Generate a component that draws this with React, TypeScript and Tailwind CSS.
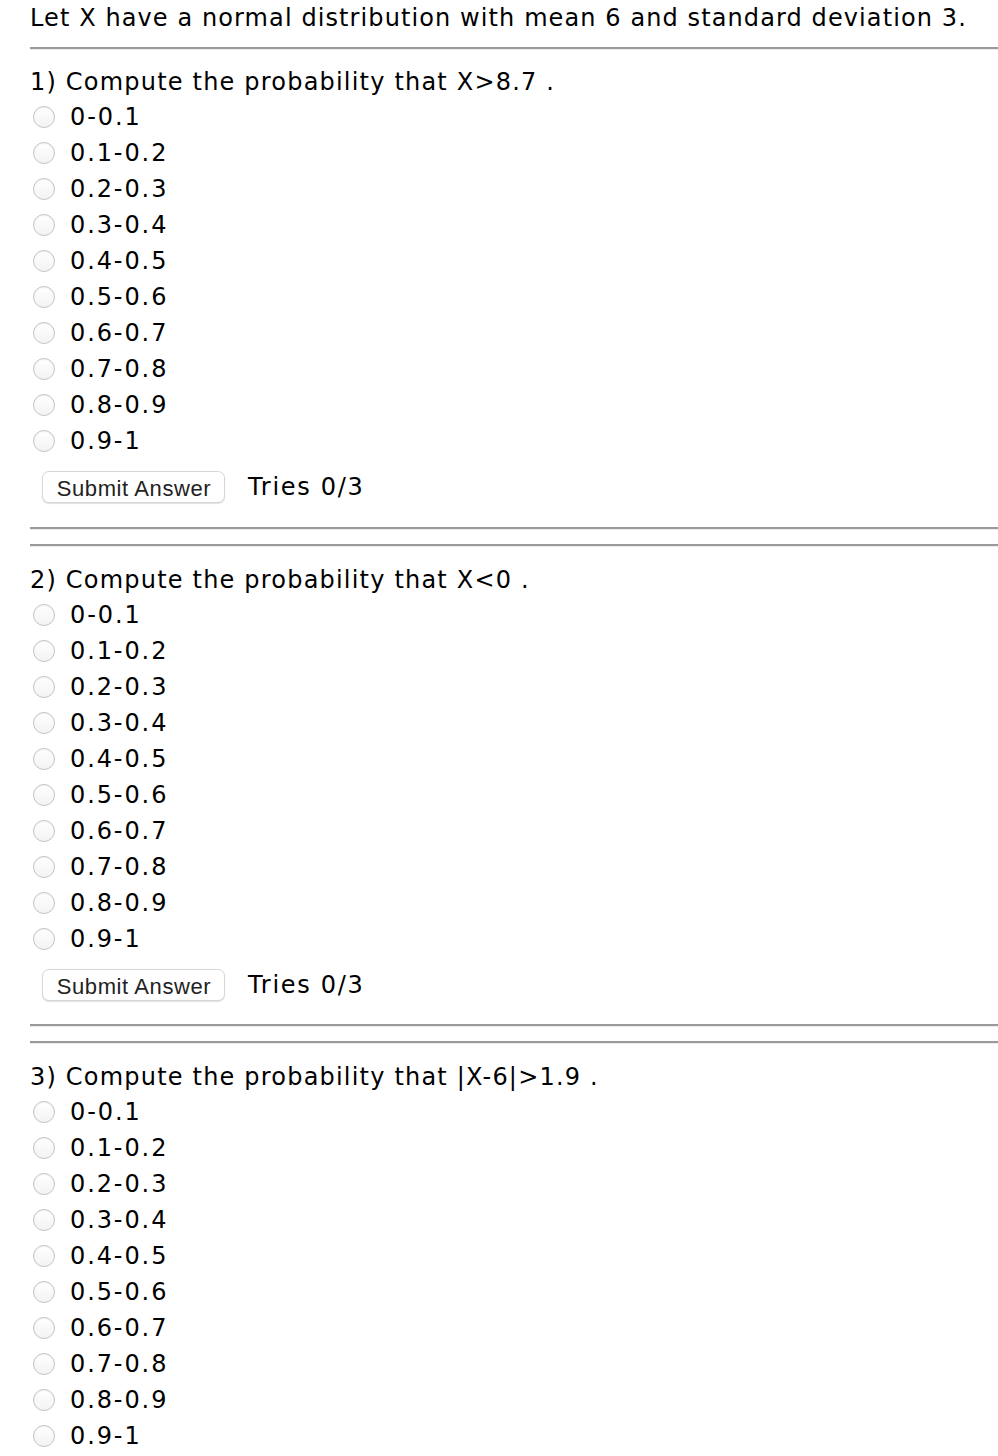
import React from "react";

const OPTIONS = [
  "0-0.1",
  "0.1-0.2",
  "0.2-0.3",
  "0.3-0.4",
  "0.4-0.5",
  "0.5-0.6",
  "0.6-0.7",
  "0.7-0.8",
  "0.8-0.9",
  "0.9-1",
];

function Rule({ className = "" }: { className?: string }) {
  return (
    <div
      className={`h-[3px] border-t-2 border-b border-t-[#9a9a9a] border-b-[#ececec] ${className}`}
    />
  );
}

function Radio() {
  return (
    <span className="ml-[3px] inline-block h-[22px] w-[22px] shrink-0 rounded-full border border-[#c4c4c4] bg-gradient-to-b from-white to-[#f3f3f3] shadow-[inset_0_1px_1px_rgba(0,0,0,0.05)]" />
  );
}

function Problem({ title, footer = true }: { title: string; footer?: boolean }) {
  return (
    <div>
      <div className="h-[33px] text-[24px] leading-[33px] tracking-[1.2px]">{title}</div>
      {OPTIONS.map((o) => (
        <label key={o} className="flex h-[36px] items-center">
          <Radio />
          <span className="ml-[15px] text-[24px] leading-[36px] tracking-[1.9px]">{o}</span>
        </label>
      ))}
      {footer && (
        <div className="mt-[11px] flex h-[33px] items-center">
          <button className="ml-[12px] h-[32px] w-[183px] rounded-[7px] border border-[#d6d6d6] bg-white pl-[1px] text-[22px] tracking-[0.6px] text-[#222] shadow-[0_1px_1px_rgba(0,0,0,0.12)] font-['Liberation_Sans',Arial,sans-serif]">
            Submit Answer
          </button>
          <span className="ml-[23px] text-[24px] tracking-[1.7px]">Tries 0/3</span>
        </div>
      )}
    </div>
  );
}

export default function App() {
  return (
    <div className="h-[1456px] overflow-hidden bg-white pl-[30px] text-black font-['DejaVu_Sans',Verdana,sans-serif]">
      <div className="h-[34px] pt-[1px] text-[24px] leading-[34px] tracking-[1.1px]">
        Let X have a normal distribution with mean 6 and standard deviation 3.
      </div>
      <Rule className="mt-[13px]" />
      <div className="mt-[16px]">
        <Problem title="1) Compute the probability that X>8.7 ." />
      </div>
      <Rule className="mt-[24px]" />
      <Rule className="mt-[14px]" />
      <div className="mt-[17px]">
        <Problem title="2) Compute the probability that X<0 ." />
      </div>
      <Rule className="mt-[23px]" />
      <Rule className="mt-[14px]" />
      <div className="mt-[17px]">
        <Problem title="3) Compute the probability that |X-6|>1.9 ." footer={false} />
      </div>
    </div>
  );
}
